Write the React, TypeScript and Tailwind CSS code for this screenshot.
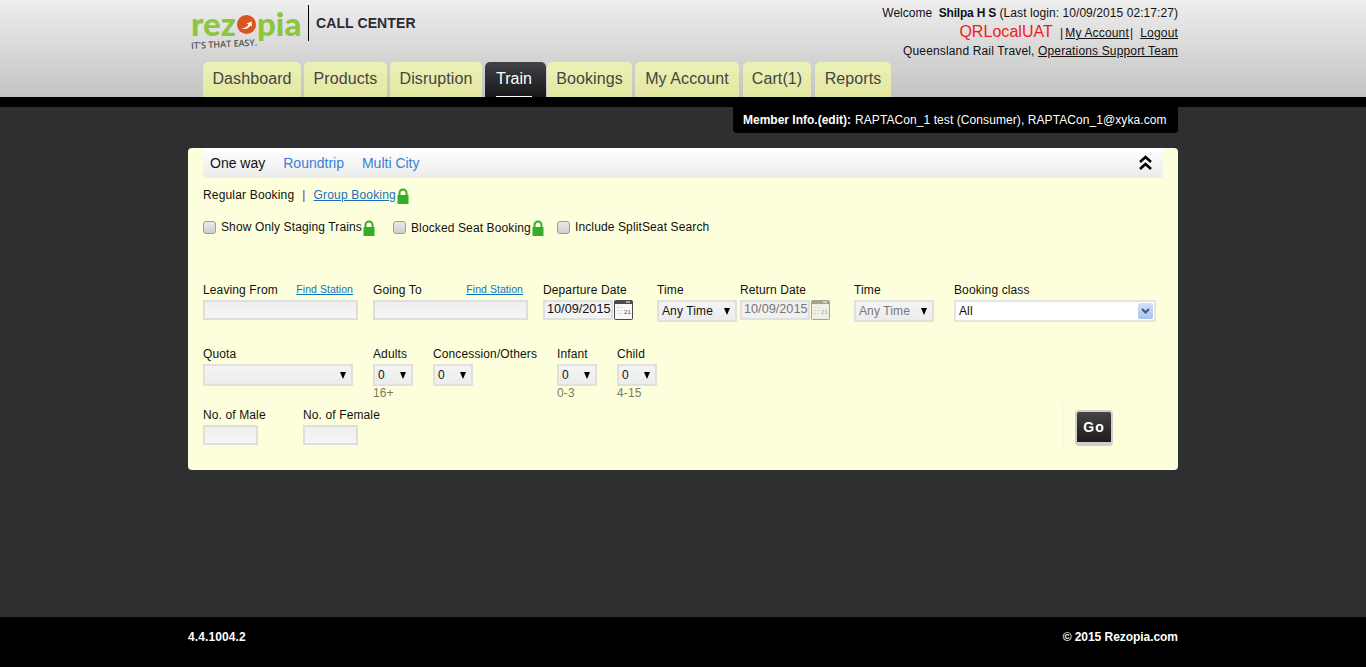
const tabs = [
  { name: "Dashboard", className: "mr-[3px] w-[98px]" },
  { name: "Products", className: "mr-[3px] w-[83px]" },
  { name: "Disruption", className: "mr-[3px] w-[92px]" },
  { name: "Train", className: "mr-[1px] w-[61px]" },
  { name: "Bookings", className: "mr-[3px] w-[85px]" },
  { name: "My Account", className: "mr-[4px] w-[104px]" },
  { name: "Cart(1)", className: "mr-[4px] w-[68px]" },
  { name: "Reports", className: "w-[76px]" },
];

function Lock() {
  return (
    <svg width="12" height="16" viewBox="0 0 12 16">
      <path d="M2.5 8V5a3.5 3.5 0 0 1 7 0v3" fill="none" stroke="#35ad2c" strokeWidth="2" />
      <rect x="0.5" y="7" width="11" height="9" rx="0.5" fill="#35ad2c" />
    </svg>
  );
}

function Calendar({ dim = false }: { dim?: boolean }) {
  const dark = dim ? "#a3a38e" : "#4a4a4a";
  return (
    <svg width="19" height="20" viewBox="0 0 19 20" className="ml-[1px] shrink-0">
      <rect width="19" height="20" rx="2" fill={dark} />
      <rect x="1" y="4" width="17" height="15" fill={dim ? "#efefe2" : "#f7f7f7"} />
      <rect x="12" y="1.500" width="4" height="1" fill="#fff" />
      <path d="M4 7v9M7 7v9" stroke="#bbb" strokeDasharray="1 2" />
      <text x="10" y="14" fontSize="6" fontFamily="Liberation Sans, sans-serif" fill={dim ? "#aaa" : "#555"}>
        21
      </text>
    </svg>
  );
}

function Caret() {
  return <span className="h-0 w-0 border-x-[3.5px] border-t-[7px] border-x-transparent border-t-black" />;
}

function FakeSelect({ value, w, dim = false }: { value: string; w: string; dim?: boolean }) {
  return (
    <div className={`${w} flex h-[22px] items-center justify-between border-2 border-[#e0e0e0] bg-gradient-to-b from-[#f4f4f4] to-[#ececec] pl-[3px] pr-[5px] text-[12px] ${dim ? "text-[#777]" : "text-[#111]"}`}>
      <span>{value}</span>
      <Caret />
    </div>
  );
}

function TextBox({ w }: { w: string }) {
  return <input type="text" className={`${w} block h-5 border-2 border-[#dedede] bg-gradient-to-b from-[#efefef] to-[#f6f6f6] outline-none`} />;
}

function Label({ children }: { children: React.ReactNode }) {
  return <div className="h-[16px] text-[12px] leading-[16px] text-[#111]">{children}</div>;
}

function FindLink() {
  return <a className="text-[10.5px] leading-[14px] tracking-[0.05px] text-[#0f74c0] underline">Find Station</a>;
}

function CheckItem({ label, lock, className, textClass = "" }: { label: string; lock?: boolean; className: string; textClass?: string }) {
  return (
    <label className={`flex items-center ${className}`}>
      <input type="checkbox" className="mr-[5px] h-[13px] w-[13px] appearance-none rounded-[3px] border border-[#9c9c9c] bg-gradient-to-b from-[#e9e9e9] to-[#cfcfcf]" />
      <span className={textClass}>{label}</span>
      {lock && <span className="ml-[1px] mt-[2px]"><Lock /></span>}
    </label>
  );
}

function Logo() {
  return (
    <div className="relative w-[120px] pl-[3px] pt-[2px]">
      <div className="flex h-[32px] items-center font-['Lato',sans-serif] text-[33px] font-black leading-[32px] text-[#8cc63f]">
        <span>rez</span>
        <svg width="19" height="19" viewBox="0 0 19 19" className="mx-[1px] mt-[3px] shrink-0">
          <circle cx="9.500" cy="9.500" r="9.500" fill="#d9541e" />
          <path d="M3.500 12.500c3 1.500 6.500 0 8-3l-1.800-1 5-2 .3 5-1.600-1c-2 3.500-6.500 4.500-9.900 2z" fill="#fff" />
        </svg>
        <span>pia</span>
      </div>
      <div className="mt-[1px] origin-left -rotate-3 font-['Open_Sans',sans-serif] text-[9px] font-semibold leading-[11px] text-[#555]">
        IT'S THAT EASY.
      </div>
    </div>
  );
}

export default function App() {
  return (
    <div className="flex min-h-[667px] flex-col bg-[#2e2f31] font-['Liberation_Sans',Arial,sans-serif]">
      <header className="h-[97px] bg-gradient-to-b from-[#eeeeee] to-[#c3c3c3]">
        <div className="mx-auto w-[990px]">
          <div className="flex h-[62px] justify-between">
            <div className="flex items-start pt-[5px]">
              <Logo />
              <div className="h-[36px] w-px bg-black" />
              <div className="ml-[7px] pt-[9px] text-[14px] font-bold leading-[18px] tracking-[0.1px] text-[#2b2b35]">CALL CENTER</div>
            </div>
            <div className="pt-[5px] text-right text-[12px] text-[#111]">
              <div className="h-[16px] leading-[16px] tracking-[0.07px]">
                <span className="tracking-normal">Welcome&nbsp; </span>
                <b className="tracking-[-0.2px]">Shilpa H S</b> (Last login: 10/09/2015 02:17:27)
              </div>
              <div className="flex h-[21px] items-center justify-end pt-[1px] leading-[20px] tracking-[0.17px]">
                <span className="mr-[7px] text-[16px] tracking-[0.05px] text-[#f01c1c]">QRLocalUAT</span>
                <span className="mr-[2px] pt-[2px]">|</span>
                <a className="pt-[2px] underline">My Account</a>
                <span className="ml-[1px] mr-[7px] pt-[2px]">|</span>
                <a className="pt-[2px] underline">Logout</a>
              </div>
              <div className="mt-[1px] h-[16px] leading-[16px] tracking-[0.15px]">
                Queensland Rail Travel, <a className="underline">Operations Support Team</a>
              </div>
            </div>
          </div>
          <nav className="ml-[15px] flex h-[35px]">
            {tabs.map((tab) =>
              tab.name === "Train" ? (
                <div key={tab.name} className={`${tab.className} rounded-t-[5px] bg-gradient-to-b from-[#414347] to-[#17181a] pl-[11px] pt-[7px] text-[16px] leading-[20px] text-white`}>
                  <span className="block h-[28px] w-[36px] border-b border-white">{tab.name}</span>
                </div>
              ) : (
                <div key={tab.name} className={`${tab.className} rounded-t-[5px] bg-gradient-to-b from-[#ecf1b8] to-[#e2e79f] pt-[7px] text-center text-[16px] leading-[20px] tracking-[0.1px] text-[#444444]`}>
                  {tab.name}
                </div>
              ),
            )}
          </nav>
        </div>
      </header>
      <div className="h-[10px] bg-black" />

      <main className="flex-1">
        <div className="mx-auto w-[990px]">
          <div className="flex justify-end">
            <div className="flex h-[26px] w-[445px] items-center rounded-b-[4px] bg-black pl-[10px] text-[12px] text-white">
              <b className="mr-[4px]">Member Info.(edit):</b>
              <span className="tracking-[0.08px]">RAPTACon_1 test (Consumer), RAPTACon_1@xyka.com</span>
            </div>
          </div>

          <section className="mt-[15px] h-[322px] rounded-[4px] bg-[#fdffdc] px-[15px] tracking-[0.12px]">
            <div className="flex h-[30px] items-center justify-between rounded-b-[4px] bg-gradient-to-b from-white to-[#ebebeb] pl-[7px] pr-[10px] text-[14px] tracking-normal">
              <div className="flex gap-[18px]">
                <span className="text-[#111]">One way</span>
                <a className="text-[#3a7fd5]">Roundtrip</a>
                <a className="text-[#3a7fd5]">Multi City</a>
              </div>
              <svg width="15" height="16" viewBox="0 0 15 16">
                <path d="M2 7l5.500-5 5.500 5M2 14l5.500-5 5.500 5" fill="none" stroke="#000" strokeWidth="2.600" />
              </svg>
            </div>

            <div className="mt-[9px] flex h-[16px] items-center text-[12px] tracking-[0.17px] text-[#111]">
              <span>Regular Booking</span>
              <span className="mx-[8px] text-[#7a1f7a]">|</span>
              <a className="text-[#1a6fb8] underline">Group Booking</a>
              <span className="ml-[1px] mt-[1px]"><Lock /></span>
            </div>

            <div className="mt-[16px] flex h-[16px] items-center text-[12px] text-[#111]">
              <CheckItem label="Show Only Staging Trains" lock className="w-[190px]" />
              <CheckItem label="Blocked Seat Booking" lock className="w-[164px]" textClass="pt-[2px]" />
              <CheckItem label="Include SplitSeat Search" className="" />
            </div>

            <div className="mt-[47px] flex items-start">
              <div className="w-[170px]">
                <div className="flex w-[150px] justify-between"><Label>Leaving From</Label><FindLink /></div>
                <div className="mt-[2px]"><TextBox w="w-[155px]" /></div>
              </div>
              <div className="w-[170px]">
                <div className="flex w-[150px] justify-between"><Label>Going To</Label><FindLink /></div>
                <div className="mt-[2px]"><TextBox w="w-[155px]" /></div>
              </div>
              <div className="w-[114px]">
                <Label>Departure Date</Label>
                <div className="mt-[2px] flex">
                  <div className="flex h-5 w-[70px] items-center border-2 border-[#e0e0e0] bg-[#f3f3f3] pl-[2px] text-[12.7px] tracking-normal text-[#111]">10/09/2015</div>
                  <Calendar />
                </div>
              </div>
              <div className="w-[83px]">
                <Label>Time</Label>
                <div className="mt-[2px]"><FakeSelect value="Any Time" w="w-[80px]" /></div>
              </div>
              <div className="w-[114px]">
                <Label>Return Date</Label>
                <div className="mt-[2px] flex">
                  <div className="flex h-5 w-[70px] items-center border-2 border-[#e0e0e0] bg-[#f0f0f0] pl-[2px] text-[12.7px] tracking-normal text-[#777]">10/09/2015</div>
                  <Calendar dim />
                </div>
              </div>
              <div className="w-[100px]">
                <Label>Time</Label>
                <div className="mt-[2px]"><FakeSelect value="Any Time" w="w-[80px]" dim /></div>
              </div>
              <div>
                <Label>Booking class</Label>
                <div className="mt-[2px] flex h-[22px] w-[202px] items-center justify-between border-2 border-[#e4e4e4] bg-white pl-[3px] pr-[1px] text-[12px] text-[#111]">
                  <span>All</span>
                  <div className="flex h-[16px] w-[15px] items-center justify-center rounded-[2px] bg-gradient-to-b from-[#d5e1f7] to-[#a9c1ef]">
                    <svg width="9" height="6" viewBox="0 0 9 6">
                      <path d="M1 1l3.500 3.500L8 1" fill="none" stroke="#44557a" strokeWidth="2" />
                    </svg>
                  </div>
                </div>
              </div>
            </div>

            <div className="mt-[24px] flex items-start">
              <div className="w-[170px]">
                <Label>Quota</Label>
                <div className="mt-[2px]"><FakeSelect value="" w="w-[150px]" /></div>
              </div>
              <div className="w-[60px]">
                <Label>Adults</Label>
                <div className="mt-[2px]"><FakeSelect value="0" w="w-[40px]" /></div>
                <div className="text-[12px] leading-[14px] text-[#7a7a5a]">16+</div>
              </div>
              <div className="w-[124px]">
                <Label>Concession/Others</Label>
                <div className="mt-[2px]"><FakeSelect value="0" w="w-[40px]" /></div>
              </div>
              <div className="w-[60px]">
                <Label>Infant</Label>
                <div className="mt-[2px]"><FakeSelect value="0" w="w-[40px]" /></div>
                <div className="text-[12px] leading-[14px] text-[#7a7a5a]">0-3</div>
              </div>
              <div>
                <Label>Child</Label>
                <div className="mt-[2px]"><FakeSelect value="0" w="w-[40px]" /></div>
                <div className="text-[12px] leading-[14px] text-[#7a7a5a]">4-15</div>
              </div>
            </div>

            <div className="flex items-start">
              <div className="mt-[7px] flex">
                <div className="w-[100px]">
                  <Label>No. of Male</Label>
                  <div className="mt-[2px]"><TextBox w="w-[55px]" /></div>
                </div>
                <div>
                  <Label>No. of Female</Label>
                  <div className="mt-[2px]"><TextBox w="w-[55px]" /></div>
                </div>
              </div>
              <div className="ml-auto mr-[50px] mt-[3px] flex h-[47px] items-start border-l border-[#f0f0dc] pl-[12px] pt-[7px]">
                <button className="h-[36px] w-[38px] rounded-[4px] border-2 border-b-[4px] border-[#cfcfcf] bg-gradient-to-b from-[#444444] to-[#1f1c1a] text-[14px] font-bold tracking-[1px] text-white">
                  Go
                </button>
              </div>
            </div>
          </section>
        </div>
      </main>

      <footer className="h-[50px] bg-black">
        <div className="mx-auto flex w-[990px] justify-between pt-[12px] text-[12px] font-bold leading-[16px] text-white">
          <span className="tracking-[0.1px]">4.4.1004.2</span>
          <span className="tracking-[-0.05px]">© 2015 Rezopia.com</span>
        </div>
      </footer>
    </div>
  );
}
